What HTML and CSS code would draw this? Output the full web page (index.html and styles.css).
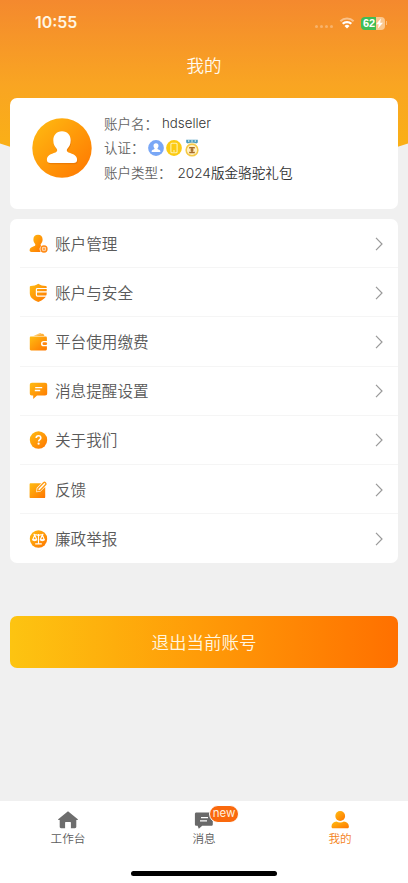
FILE: index.html
```html
<!DOCTYPE html>
<html lang="zh-CN">
<head>
<meta charset="utf-8">
<meta name="viewport" content="width=device-width, initial-scale=1">
<title>我的</title>
<link rel="stylesheet" href="styles.css">
</head>
<body>
<svg class="defs" width="0" height="0" aria-hidden="true">
  <defs>
    <linearGradient id="warm" x1="0" y1="0" x2="1" y2="1"><stop offset="0" stop-color="#ffbd12"/><stop offset="1" stop-color="#ff7500"/></linearGradient>
  </defs>
</svg>
<div class="app">
  <div class="backdrop"></div>
  <div class="status">
    <span class="time">10:55</span>
    <div class="signals">
      <span class="dots"><i></i><i></i><i></i><i></i></span>
      <svg class="wifi" width="16" height="12" viewBox="0 0 16 12" fill="none">
        <path d="M1.400 4.300a9.300 9.300 0 0 1 13.200 0" stroke="#fff" stroke-opacity=".45" stroke-width="2"/>
        <path d="M3.700 6.800a6.100 6.100 0 0 1 8.600 0" stroke="#fff" stroke-width="2.300"/>
        <path d="M5.500 9.100a3.500 3.500 0 0 1 5 0L8 11.600z" fill="#fff"/>
      </svg>
      <span class="battery"><span>62</span><svg width="7" height="11" viewBox="0 0 7 11"><path d="M4.900.5 0 6.200h2.700l-.8 4.300L7 4.700H4.200z" fill="#fff"/></svg></span>
      <span class="cap"></span>
    </div>
  </div>
  <h1>我的</h1>

  <section class="card profile">
    <svg class="avatar" width="60" height="60" viewBox="0 0 60 60">
      <circle cx="30" cy="30" r="29.7" fill="url(#warm)"/>
      <path d="M30 13.200c-5.600 0-8.700 4-8.700 9 0 4.300 1.700 6.600 3.500 8.800.9 1.200.2 2.800-1.300 3.400-4.600 1.700-8.600 2.700-8.600 7.400 0 2.300 1.300 3.200 3.600 3.200h23c2.300 0 3.600-.9 3.600-3.200 0-4.700-4-5.700-8.600-7.400-1.500-.6-2.200-2.200-1.300-3.400 1.800-2.200 3.500-4.500 3.500-8.800 0-5-3.100-9-8.700-9z" fill="#dc6800" opacity=".5" transform="translate(.6 1.300)"/>
      <path d="M30 13.200c-5.600 0-8.700 4-8.700 9 0 4.300 1.700 6.600 3.500 8.800.9 1.200.2 2.800-1.300 3.400-4.600 1.700-8.600 2.700-8.600 7.400 0 2.300 1.300 3.200 3.600 3.200h23c2.300 0 3.600-.9 3.600-3.200 0-4.700-4-5.700-8.600-7.400-1.500-.6-2.200-2.200-1.300-3.400 1.800-2.200 3.500-4.500 3.500-8.800 0-5-3.100-9-8.700-9z" fill="#fff"/>
    </svg>
    <div class="facts">
      <div class="fact"><span class="label">账户名：</span><span class="value name">hdseller</span></div>
      <div class="fact"><span class="label">认证：</span>
        <span class="badges">
          <svg width="16" height="16" viewBox="0 0 16 16"><circle cx="8" cy="8" r="7.900" fill="#79a7f6"/><path d="M8 3.200c-1.700 0-2.500 1.200-2.500 2.500 0 1.200.5 1.900 1 2.500.2.700-.2 1-.8 1.200-1.300.4-2.100.8-2.100 2 0 .4.200.6.600.6h7.600c.4 0 .6-.2.600-.6 0-1.200-.8-1.600-2.100-2-.6-.2-1-.5-.8-1.200.5-.6 1-1.300 1-2.500 0-1.300-.8-2.500-2.500-2.500z" fill="#fff"/></svg>
          <svg width="16" height="16" viewBox="0 0 16 16"><circle cx="8" cy="8" r="7.900" fill="#fccb12"/><rect x="4.900" y="3.300" width="6.200" height="9.400" rx="1" fill="none" stroke="#fff0b0" stroke-width="1.100"/><path d="M7 11h2" stroke="#fff0b0"/></svg>
          <svg class="medal" width="14" height="18" viewBox="0 0 14 18"><path d="M1.200.800h11.600v2.700l-3 2.300H4.200l-3-2.300z" fill="#4d9dc0"/><path d="M3.700 1.300v1.400M7 1.300v1.400M10.300 1.300v1.400" stroke="#e2f4fa" stroke-width="1.200"/><path d="M2 4.300 7 3.500l5 .8-2 2H4z" fill="#f8ecc2"/><circle cx="7" cy="11" r="6.600" fill="#f5c945"/><circle cx="7" cy="11" r="5.100" fill="#fff1c4"/><path d="M4.200 8.700h5.600M4.200 13.500h5.600M7 8.700v4.800M5.500 11.100h3" stroke="#a76925" stroke-width="1.500"/></svg>
        </span>
      </div>
      <div class="fact"><span class="label">账户类型：</span><span class="value plan">2024版金骆驼礼包</span></div>
    </div>
  </section>

  <nav class="card menu">
    <a class="row"><svg class="icon" viewBox="0 0 20 20"><path d="M9 .8c-3 0-4.600 2-4.600 4.600 0 2 .8 3.300 1.700 4.500.7 1-.1 1.900-1.300 2.400C2.500 13.200.6 14 .6 16.300c0 1.200.7 1.700 1.800 1.700h9.300a4.700 4.700 0 0 1 .6-6.300c-.7-.4-.9-1-.4-1.800.9-1.200 1.700-2.500 1.700-4.500C13.600 2.800 12 .8 9 .8z" fill="url(#warm)"/><circle cx="15" cy="15" r="2.900" fill="#fff" stroke="#ff8914" stroke-width="1.500"/><path d="M13.300 15h3.400M15 13.300v3.400" stroke="#ff8914" stroke-width="1.100"/></svg><span>账户管理</span><svg class="chevron" viewBox="0 0 8 14"><path d="m1 .8 6 6.200-6 6.200"/></svg></a>
    <a class="row"><svg class="icon" viewBox="0 0 20 20"><path d="M9.300.7c2.300 1.500 4.700 2.200 7.500 2.200.5 0 .9.300.9.800v6.500c0 4.400-3.900 6.900-8.400 8.900C4.700 17.100.8 14.600.8 10.200V3.700c0-.5.400-.8.900-.8C4.600 2.900 6.900 2.200 9.300.7z" fill="url(#warm)"/><path d="M18.500 5.500H8.400c-.6 0-1 .4-1 1v5.600c0 .6.4 1 1 1h10.100M7.400 8.800h11" fill="none" stroke="#fff" stroke-width="1.200"/></svg><span>账户与安全</span><svg class="chevron" viewBox="0 0 8 14"><path d="m1 .8 6 6.200-6 6.200"/></svg></a>
    <a class="row"><svg class="icon" viewBox="0 0 20 20"><path d="M4.500 4.100 11 1c.6-.2 1 0 1.300.5l1.400 2.600z" fill="#ffc768"/><path d="m7.500 4.100 6-2.300c.5-.2.900 0 1.100.4l.9 1.900z" fill="#ffae35"/><path d="M2 4.600h14.600c.8 0 1.300.5 1.300 1.300v3.200h-3.300a2.600 2.600 0 0 0 0 5.200h3.300v2.800c0 .8-.5 1.300-1.300 1.300H2.100c-.8 0-1.300-.5-1.300-1.300V6c0-.9.400-1.400 1.200-1.400z" fill="url(#warm)"/><rect x="13.500" y="10.300" width="4.600" height="2.800" rx="1.400" fill="#ff8711"/></svg><span>平台使用缴费</span><svg class="chevron" viewBox="0 0 8 14"><path d="m1 .8 6 6.200-6 6.200"/></svg></a>
    <a class="row"><svg class="icon" viewBox="0 0 20 20"><path d="M3 1.800h13c1.500 0 2.200.8 2.200 2.200v8.300c0 1.500-.7 2.200-2.200 2.200H8l-3.800 3.400v-3.400H3c-1.500 0-2.200-.7-2.200-2.200V4c0-1.400.7-2.200 2.200-2.200z" fill="url(#warm)"/><path d="M6.200 6.600h7M5.800 9.500h5.400" stroke="#fff" stroke-width="1.400"/></svg><span>消息提醒设置</span><svg class="chevron" viewBox="0 0 8 14"><path d="m1 .8 6 6.200-6 6.200"/></svg></a>
    <a class="row"><svg class="icon" viewBox="0 0 20 20"><circle cx="9.500" cy="10" r="8.700" fill="url(#warm)"/><path d="M7.200 8.100c0-1.500 1-2.300 2.300-2.300s2.300.8 2.300 2.100c0 1.600-2.200 1.700-2.200 3.600" fill="none" stroke="#fff" stroke-width="1.600"/><circle cx="9.600" cy="13.700" r="1.100" fill="#fff"/></svg><span>关于我们</span><svg class="chevron" viewBox="0 0 8 14"><path d="m1 .8 6 6.200-6 6.200"/></svg></a>
    <a class="row"><svg class="icon" viewBox="0 0 20 20"><path d="M1.800 3.200h10.400L7.600 7.900l-.3 4.300 4-.4 4.900-4.700v9.800c0 .8-.4 1.200-1.200 1.200H1.800c-.8 0-1.200-.4-1.200-1.200V4.400c0-.8.4-1.200 1.200-1.200z" fill="url(#warm)"/><path d="m8.700 10.800.3-2.300 5.800-5.900c.4-.4.900-.4 1.300 0l.6.600c.4.400.4.900 0 1.300L11 10.500z" fill="#fff" stroke="#ff9e18" stroke-width="1.400"/></svg><span>反馈</span><svg class="chevron" viewBox="0 0 8 14"><path d="m1 .8 6 6.200-6 6.200"/></svg></a>
    <a class="row"><svg class="icon" viewBox="0 0 20 20"><circle cx="9.500" cy="10" r="8.700" fill="url(#warm)"/><path d="M4.500 5.300c2 0 3.200 1 5 1s3-1 5-1M9.500 5v9.500M6.200 14.900h6.600M5.700 6l-2 4.700h4zM13.300 6l-2 4.700h4z" fill="none" stroke="#fff" stroke-width="1.100"/><path d="M3.300 10.500h4.800c-.4 2.200-4.400 2.200-4.800 0zM10.900 10.500h4.800c-.4 2.200-4.400 2.200-4.800 0z" fill="#fff"/></svg><span>廉政举报</span><svg class="chevron" viewBox="0 0 8 14"><path d="m1 .8 6 6.200-6 6.200"/></svg></a>
  </nav>

  <button class="logout">退出当前账号</button>

  <footer class="tabbar">
    <div class="tabs">
      <a class="tab"><svg width="20" height="18" viewBox="0 0 20 18"><path d="M10 .3.200 8.200c-.3.300-.2.700.3.700h1.200v6.900c0 .9.500 1.400 1.400 1.400h4v-5.700c0-.4.200-.6.600-.6h4.600c.4 0 .6.200.6.600v5.700h4c.9 0 1.400-.5 1.400-1.400V8.900h1.200c.5 0 .6-.4.300-.7z" fill="#6d6d6d"/></svg><span>工作台</span></a>
      <a class="tab"><span class="bubble"><svg width="20" height="18" viewBox="0 0 20 18"><path d="M2.500 1.500h14.700c1 0 1.600.6 1.600 1.600v10.100c0 1-.6 1.600-1.600 1.600H8.200l-3.400 2.900-1.200-2.900H2.500c-1 0-1.600-.6-1.600-1.600V3.100c0-1 .6-1.600 1.600-1.600z" fill="#696969"/><path d="M7 6.600h7M6 9.900h7" stroke="#fff" stroke-width="1.200"/></svg><em>new</em></span><span>消息</span></a>
      <a class="tab active"><svg width="20" height="18" viewBox="0 0 20 18"><circle cx="10.200" cy="5" r="4.900" fill="url(#warm)"/><path d="M1.500 15.400c0-2.800 2.200-4.500 5-4.800 2 1.300 5.400 1.300 7.400 0 2.800.3 5 2 5 4.800 0 1.300-.6 1.900-1.900 1.900H3.400c-1.300 0-1.900-.6-1.900-1.900z" fill="url(#warm)"/></svg><span>我的</span></a>
    </div>
    <div class="home-indicator"></div>
  </footer>
</div>
</body>
</html>
```
FILE: styles.css
```css
* { box-sizing: border-box; }
body {
  margin: 0;
  background: #f0f0f0;
  font-family: "Noto Sans CJK SC", sans-serif;
  font-weight: 350;
}
svg { display: block; flex: none; }
.defs { position: absolute; }
.app {
  position: relative;
  display: flex;
  flex-direction: column;
  height: 883px;
  overflow: hidden;
}
.backdrop {
  position: absolute;
  z-index: -1;
  top: 0;
  left: -51px;
  right: -51px;
  height: 170px;
  background: linear-gradient(#f4892e 0, #f9a522 85px, #fab016 150px);
  border-radius: 0 0 50% 50% / 0 0 66px 66px;
}
.status {
  display: flex;
  justify-content: space-between;
  align-items: center;
  height: 46px;
  padding: 0 21px 0 35px;
}
.time {
  color: #fff6e3;
  font: 600 15.900px/20px Inter, sans-serif;
}
.signals { display: flex; align-items: center; }
.dots { display: flex; gap: 2px; margin: 7px 6px 0 0; }
.dots i { width: 3px; height: 3px; border-radius: 50%; background: rgba(255, 255, 255, .3); }
.wifi { margin-right: 6px; }
.battery {
  display: flex;
  align-items: center;
  width: 24px;
  height: 13px;
  padding-left: 2px;
  border-radius: 4px;
  background: linear-gradient(90deg, #3fbd55 62%, #fbc78d 62%);
  color: #fff;
  font: 700 11px/13px "Liberation Sans", sans-serif;
}
.battery svg { margin-left: 1px; }
.cap { width: 1px; height: 4px; margin-left: 1px; background: rgba(255, 255, 255, .4); }
h1 {
  margin: 6px 0 0;
  height: 26px;
  color: #fffaf0;
  font-size: 17.500px;
  font-weight: 350;
  line-height: 26px;
  text-align: center;
}
.card { margin: 0 10px; border-radius: 7px; background: #fff; }
.profile {
  display: flex;
  height: 111px;
  margin-top: 20px;
  padding: 13px 22px;
}
.avatar { margin-top: 7px; }
.facts { margin-left: 12px; }
.fact { display: flex; align-items: center; height: 24.300px; font-size: 13.500px; white-space: nowrap; }
.label { color: #666; }
.value { color: #333; }
.name { margin-left: 4px; font-family: Inter, "Noto Sans CJK SC", sans-serif; font-weight: 350; font-size: 13.300px; }
.plan { margin-left: 6px; font-family: Inter, "Noto Sans CJK SC", sans-serif; font-weight: 350; font-size: 13.600px; }
.badges { display: flex; align-items: center; gap: 2.500px; margin: 1px 0 0 3px; }
.menu { margin-top: 10px; }
.row {
  display: flex;
  align-items: center;
  height: 49.200px;
  padding: 0 15px 0 19px;
  color: #5a5a5a;
  font-size: 15.600px;
  background: linear-gradient(#f5f5f5, #f5f5f5) 10px 100% / 100% 1px no-repeat;
}
.row > span { margin-top: -2px; }
.row:last-child { background: none; }
.icon { width: 20px; height: 20px; margin-right: 6px; }
.chevron {
  width: 8px;
  height: 14px;
  margin-left: auto;
  fill: none;
  stroke: #999;
  stroke-width: 1.200;
}
.logout {
  height: 52px;
  margin: 52.600px 10px 0;
  padding: 0;
  border: 0;
  border-radius: 7px;
  background: linear-gradient(90deg, #fdc411, #ff9c08 48%, #ff7000);
  color: #fff6e0;
  font: 350 17.500px/52px "Noto Sans CJK SC", sans-serif;
}
.tabbar { height: 82px; margin-top: auto; background: #fff; }
.tabs { display: grid; grid-template-columns: repeat(3, 1fr); height: 71px; padding-top: 10px; }
.tab {
  display: flex;
  flex-direction: column;
  align-items: center;
  color: #5c5c5c;
  font-size: 11.600px;
  line-height: 18px;
}
.active { color: #f48220; }
.bubble { position: relative; }
.bubble em {
  position: absolute;
  left: 15px;
  top: -6px;
  width: 30px;
  height: 18px;
  border: 1px solid #fff;
  border-radius: 9px;
  background: #fa690d;
  color: #fff0dd;
  font: 400 11.500px/15px Inter, sans-serif;
  text-align: center;
}
.home-indicator { width: 146px; height: 5px; margin: -1px auto 0; border-radius: 3px; background: #000; }
```
